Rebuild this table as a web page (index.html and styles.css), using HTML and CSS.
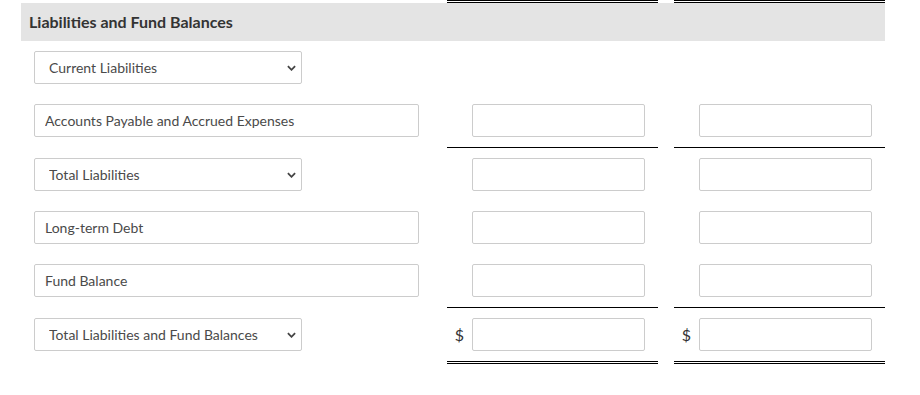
FILE: index.html
```html
<!DOCTYPE html>
<html lang="en">

<head>
    <meta charset="UTF-8">
    <meta name="viewport" content="width=device-width, initial-scale=1.0">
    <title>Liabilities and Fund Balances</title>
    <link rel="stylesheet" href="styles.css">
</head>

<body>
    <div class="sheet">
        <!-- closing rule of the section above -->
        <div class="cell closing"></div>
        <div class="cell closing rule-double"></div>
        <div class="cell closing rule-double"></div>

        <div class="section-head">Liabilities and Fund Balances</div>

        <div class="cell label">
            <span class="select-wrap">
                <select class="pick">
                    <option>Current Liabilities</option>
                </select>
                <svg class="chevron" viewBox="0 0 10 6" width="9" height="6"><path d="M1 1l4 4 4-4" /></svg>
            </span>
        </div>
        <div class="cell amount"></div>
        <div class="cell amount"></div>

        <div class="cell label">
            <input class="entry" type="text" value="Accounts Payable and Accrued Expenses">
        </div>
        <div class="cell amount rule"><span class="sign"></span><input class="num" type="text"></div>
        <div class="cell amount rule"><span class="sign"></span><input class="num" type="text"></div>

        <div class="cell label">
            <span class="select-wrap">
                <select class="pick">
                    <option>Total Liabilities</option>
                </select>
                <svg class="chevron" viewBox="0 0 10 6" width="9" height="6"><path d="M1 1l4 4 4-4" /></svg>
            </span>
        </div>
        <div class="cell amount"><span class="sign"></span><input class="num" type="text"></div>
        <div class="cell amount"><span class="sign"></span><input class="num" type="text"></div>

        <div class="cell label">
            <input class="entry" type="text" value="Long-term Debt">
        </div>
        <div class="cell amount"><span class="sign"></span><input class="num" type="text"></div>
        <div class="cell amount"><span class="sign"></span><input class="num" type="text"></div>

        <div class="cell label">
            <input class="entry" type="text" value="Fund Balance">
        </div>
        <div class="cell amount rule"><span class="sign"></span><input class="num" type="text"></div>
        <div class="cell amount rule"><span class="sign"></span><input class="num" type="text"></div>

        <div class="cell label">
            <span class="select-wrap">
                <select class="pick">
                    <option>Total Liabilities and Fund Balances</option>
                </select>
                <svg class="chevron" viewBox="0 0 10 6" width="9" height="6"><path d="M1 1l4 4 4-4" /></svg>
            </span>
        </div>
        <div class="cell amount rule-double"><span class="sign">$</span><input class="num" type="text"></div>
        <div class="cell amount rule-double"><span class="sign">$</span><input class="num" type="text"></div>
    </div>
</body>

</html>
```

FILE: styles.css
```css
* {
    margin: 0;
    padding: 0;
    box-sizing: border-box;
}

body {
    background-color: #ffffff;
    font-family: 'Lato', 'Liberation Sans', sans-serif;
    color: #333333;
}

.sheet {
    display: grid;
    grid-template-columns: 410px 211px 211px;
    column-gap: 16px;
    width: 864px;
    margin-left: 21px;
}

.section-head {
    grid-column: 1 / -1;
    height: 38px;
    line-height: 38px;
    padding-left: 8px;
    background-color: #e4e4e4;
    font-size: 16px;
    font-weight: bold;
    color: #333333;
}

.cell {
    padding: 10px 0;
}

.cell.closing {
    padding: 0;
}

.cell.label {
    padding-left: 13px;
}

.cell.amount {
    display: grid;
    grid-template-columns: 25px 173px;
    align-items: center;
}

.rule {
    border-bottom: 1px solid #000000;
}

.rule-double {
    border-bottom: 3px double #000000;
}

.sign {
    text-align: center;
    font-size: 16px;
    color: #333333;
}

.entry,
.pick,
.num {
    display: block;
    height: 33px;
    border: 1px solid #cccccc;
    border-radius: 2px;
    background-color: #ffffff;
    font-family: 'Lato', 'Liberation Sans', sans-serif;
    font-size: 14px;
    color: #4a4a4a;
    outline: none;
}

.entry {
    width: 385px;
    padding-left: 10px;
}

.num {
    width: 173px;
}

.select-wrap {
    position: relative;
    display: block;
    width: 268px;
}

.pick {
    width: 268px;
    padding-left: 14px;
    appearance: none;
    -webkit-appearance: none;
}

.chevron {
    position: absolute;
    right: 6px;
    top: 14px;
    fill: none;
    stroke: #444444;
    stroke-width: 2;
}
```
